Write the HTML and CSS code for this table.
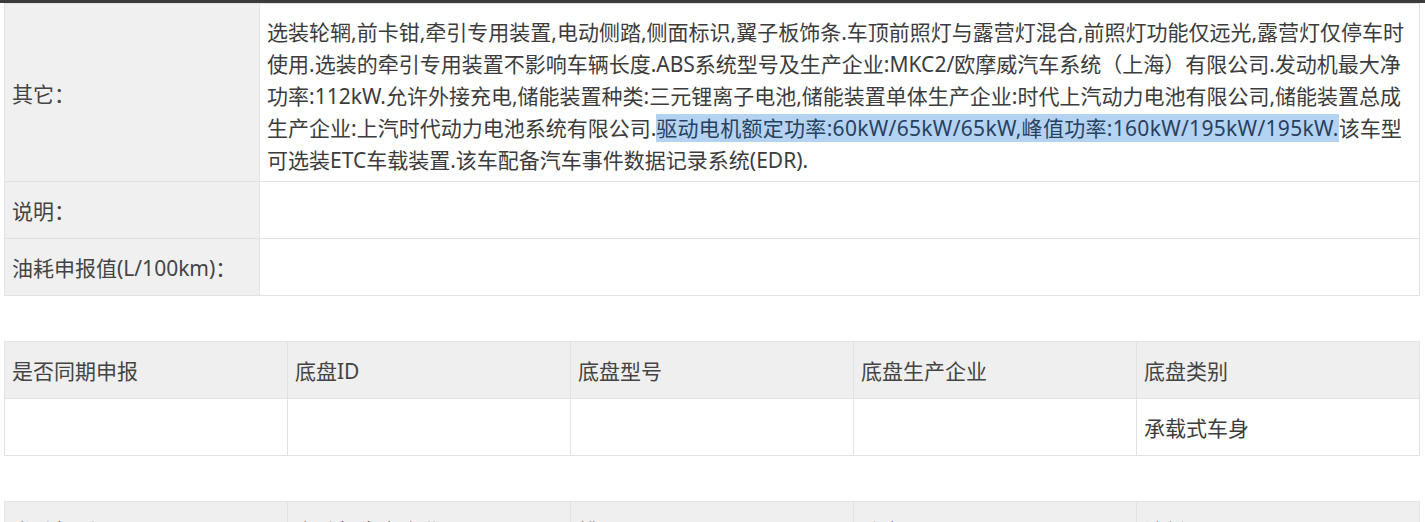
FILE: index.html
```html
<!DOCTYPE html>
<html lang="zh-CN">
<head>
<meta charset="UTF-8">
<title>车辆参数</title>
<link rel="stylesheet" href="styles.css">
</head>
<body>

<div class="topbar"></div>

<div class="page">
  <table class="info">
    <tr class="tall">
      <th>其它：</th>
      <td>选装轮辋,前卡钳,牵引专用装置,电动侧踏,侧面标识,翼子板饰条.车顶前照灯与露营灯混合,前照灯功能仅远光,露营灯仅停车时使用.选装的牵引专用装置不影响车辆长度.ABS系统型号及生产企业:MKC2/欧摩威汽车系统（上海）有限公司.发动机最大净功率:112kW.允许外接充电,储能装置种类:三元锂离子电池,储能装置单体生产企业:时代上汽动力电池有限公司,储能装置总成生产企业:上汽时代动力电池系统有限公司.<span class="sel">驱动电机额定功率:60kW/65kW/65kW,峰值功率:160kW/195kW/195kW.</span>该车型可选装ETC车载装置.该车配备汽车事件数据记录系统(EDR).</td>
    </tr>
    <tr>
      <th>说明：</th>
      <td></td>
    </tr>
    <tr>
      <th>油耗申报值(L/100km)：</th>
      <td></td>
    </tr>
  </table>

  <table class="grid">
    <tr>
      <th>是否同期申报</th>
      <th>底盘ID</th>
      <th>底盘型号</th>
      <th>底盘生产企业</th>
      <th>底盘类别</th>
    </tr>
    <tr>
      <td></td>
      <td></td>
      <td></td>
      <td></td>
      <td>承载式车身</td>
    </tr>
  </table>

  <table class="grid">
    <tr>
      <th>发动机型号</th>
      <th>发动机生产企业</th>
      <th>排量(ml)</th>
      <th>功率(kw)</th>
      <th>油耗(L/100km)</th>
    </tr>
    <tr>
      <td></td>
      <td></td>
      <td></td>
      <td></td>
      <td></td>
    </tr>
  </table>
</div>

</body>
</html>
```

FILE: styles.css
```css
body {
  margin: 0;
  background: #fff;
  color: #3c3c3c;
  font-family: "Noto Sans", "Noto Sans CJK SC", sans-serif;
  font-size: 21px;
}

.topbar {
  height: 3px;
  background: #3c3c3c;
}

.page {
  padding: 0 5px 0 4px;
}

table {
  width: 100%;
  border-collapse: collapse;
  table-layout: fixed;
}

th, td {
  border: 1px solid #e2e2e2;
  text-align: left;
  font-weight: normal;
  padding: 0 7px;
  height: 56px;
}

.info th {
  width: 240px;
  background: #f0f0f0;
  color: #444;
  vertical-align: middle;
}

.info td {
  background: #fff;
  line-height: 32px;
}

.info .tall td {
  padding: 12px 10px 5px 7px;
}

.sel {
  background: #b4d3f2;
  color: #27415e;
  letter-spacing: 0.3px;
}

.grid {
  margin-top: 45px;
}

.grid th {
  background: #efefef;
  color: #444;
}

.grid td {
  background: #fff;
}
```
